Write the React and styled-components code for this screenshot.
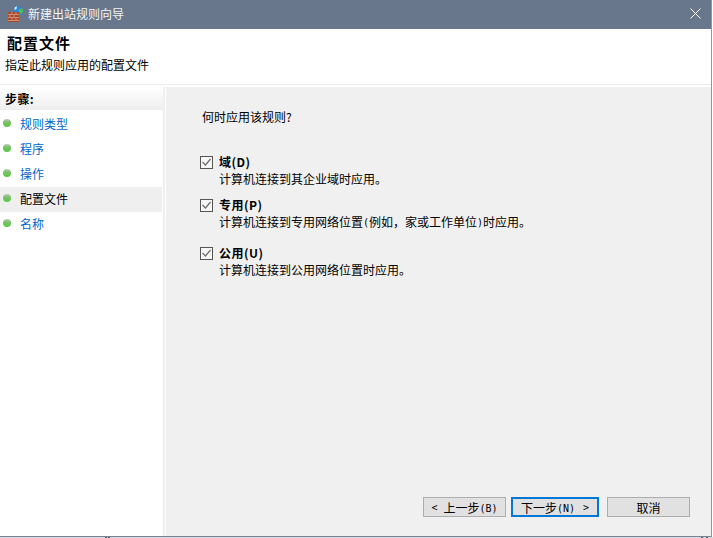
import styled, { createGlobalStyle } from "styled-components";

const GlobalStyle = createGlobalStyle`
  html, body {
    margin: 0;
    padding: 0;
    background: #ffffff;
    overflow: hidden;
  }
  * { box-sizing: border-box; }
`;

const FONT = `"Noto Sans CJK SC", "Liberation Sans", sans-serif`;

const Frame = styled.div`
  width: 713px;
  height: 538px;
  background: #fff;
  font-family: ${FONT};
  font-size: 12px;
  color: #000;
  display: flex;
  flex-direction: column;
`;

const Window = styled.div`
  width: 712px;
  height: 537px;
  flex: none;
  display: flex;
  flex-direction: column;
  border-right: 1px solid #8a98aa;
  border-bottom: 1px solid #76859a;
`;

const BottomStrip = styled.div`
  height: 1px;
  flex: none;
  background: #d9d9d9;
  display: flex;
`;

const StripMark = styled.span`
  width: 2px;
  height: 1px;
  margin-left: ${(p) => p.$space}px;
  background: #555;
`;

const TitleBar = styled.div`
  height: 29px;
  flex: none;
  background: #68778c;
  display: flex;
  align-items: center;
  padding: 0 10px 2px 8px;
  color: #f4f6f8;
`;

const TitleText = styled.span`
  margin-left: 4px;
  font-size: 12px;
  line-height: 16px;
`;

const CloseButton = styled.div`
  margin-left: auto;
  display: flex;
`;

const Header = styled.div`
  height: 56px;
  flex: none;
  background: #fff;
  padding: 4px 0 0 7px;
  border-bottom: 1px solid #ececec;
`;

const Heading = styled.div`
  font-size: 15px;
  font-weight: 700;
  line-height: 20px;
  letter-spacing: 1px;
`;

const SubHeading = styled.div`
  margin: 4px 0 0 -2px;
  font-size: 12px;
  line-height: 16px;
`;

const Body = styled.div`
  flex: 1;
  display: flex;
  padding-top: 2px;
  background: #fff;
  min-height: 0;
`;

const Sidebar = styled.div`
  width: 165px;
  flex: none;
  border-right: 2px solid #efefef;
`;

const SidebarTitle = styled.div`
  height: 23px;
  width: 163px;
  padding-left: 5px;
  display: flex;
  align-items: center;
  font-weight: 700;
  font-size: 12px;
  letter-spacing: 0.4px;
  background: linear-gradient(#ffffff, #eeeeee);
`;

const StepList = styled.div`
  display: flex;
  flex-direction: column;
  padding-top: 2px;
`;

const Step = styled.div`
  width: 162px;
  height: 25px;
  display: flex;
  align-items: center;
  gap: 9px;
  padding: 0 0 2px 3px;
  font-size: 12px;
  color: ${(p) => (p.$active ? "#000" : "#0066cc")};
  background: ${(p) => (p.$active ? "#efefef" : "transparent")};
`;

const Bullet = styled.span`
  width: 8px;
  height: 8px;
  margin-top: -2px;
  border-radius: 50%;
  flex: none;
  background: linear-gradient(#b9cdb6 0, #7fbd6c 40%, #4fd038 100%);
`;

const Content = styled.div`
  flex: 1;
  margin-left: 1px;
  background: #f0f0f0;
  display: flex;
  flex-direction: column;
  padding: 22px 21px 19px 34px;
`;

const Question = styled.div`
  line-height: 16px;
  margin-left: 2px;
`;

const Options = styled.div`
  margin-top: 29px;
  display: flex;
  flex-direction: column;
`;

const Option = styled.div`
  display: grid;
  grid-template-columns: 13px 1fr;
  column-gap: 6px;
  margin-bottom: ${(p) => p.$gap}px;
`;

const Box = styled.span`
  width: 13px;
  height: 13px;
  margin-top: 2px;
  border: 1px solid #555;
  background: #f6f6f6;
  display: flex;
`;

const OptionLabel = styled.div`
  font-weight: 700;
  line-height: 16px;
  letter-spacing: 0.5px;
`;

const OptionText = styled.div`
  grid-column: 2;
  margin-top: 1px;
  line-height: 16px;
`;

const Footer = styled.div`
  margin-top: auto;
  display: flex;
  justify-content: flex-end;
`;

const Button = styled.div`
  width: ${(p) => p.$width}px;
  height: 20px;
  margin-left: ${(p) => p.$space || 0}px;
  display: flex;
  align-items: center;
  justify-content: center;
  gap: ${(p) => p.$gap || 0}px;
  background: #e1e1e1;
  border: ${(p) => (p.$primary ? "2px solid #0078d7" : "1px solid #adadad")};
  font-size: 12px;
`;

const Mono = styled.span`
  font-family: "DejaVu Sans Mono", monospace;
  font-size: 10px;
  vertical-align: 1px;
`;

const options = [
  {
    label: "域(D)",
    text: <>计算机连接到其企业域时应用。</>,
    gap: 10,
  },
  {
    label: "专用(P)",
    text: (
      <>
        计算机连接到专用网络位置<Mono>(</Mono>例如，家或工作单位<Mono>)</Mono>时应用。
      </>
    ),
    gap: 14,
  },
  {
    label: "公用(U)",
    text: <>计算机连接到公用网络位置时应用。</>,
    gap: 0,
  },
];

const steps = ["规则类型", "程序", "操作", "配置文件", "名称"];

const FirewallIcon = () => (
  <svg width="16" height="16" viewBox="0 0 16 16">
    <circle cx="10" cy="5" r="5" fill="#2a86d6" />
    <path d="M6.500 2c.5-1 1.500-1.500 2.500-1.500l-.5 2.500-2 1z" fill="#e4f0f8" />
    <path d="M11 3l3.500-.5.5 3-2 2.500-2-2z" fill="#4cc24a" />
    <rect x="0" y="6" width="11" height="10" fill="#a8492e" />
    <path d="M0 8.500h11M0 11.500h11M0 14.500h11M4 6v2.500M8 6v2.500M2 8.500v3M6 8.500v3M4 11.500v3M8 11.500v3" stroke="#d08e72" strokeWidth="1" fill="none" />
  </svg>
);

const CheckIcon = () => (
  <svg width="11" height="11" viewBox="0 0 11 11">
    <path d="M1.500 5l3 3 5-6" stroke="#6e6e6e" strokeWidth="1.2" fill="none" />
  </svg>
);

const App = () => {
  return (
    <>
      <GlobalStyle />
      <Frame>
        <Window>
          <TitleBar>
            <FirewallIcon />
            <TitleText>新建出站规则向导</TitleText>
            <CloseButton>
              <svg width="11" height="11" viewBox="0 0 11 11">
                <path d="M.5.500l10 10M10.500.500l-10 10" stroke="#fff" strokeWidth="1" fill="none" />
              </svg>
            </CloseButton>
          </TitleBar>
          <Header>
            <Heading>配置文件</Heading>
            <SubHeading>指定此规则应用的配置文件</SubHeading>
          </Header>
          <Body>
            <Sidebar>
              <SidebarTitle>步骤:</SidebarTitle>
              <StepList>
                {steps.map((s) => (
                  <Step key={s} $active={s === "配置文件"}>
                    <Bullet />
                    {s}
                  </Step>
                ))}
              </StepList>
            </Sidebar>
            <Content>
              <Question>何时应用该规则?</Question>
              <Options>
                {options.map((o) => (
                  <Option key={o.label} $gap={o.gap}>
                    <Box>
                      <CheckIcon />
                    </Box>
                    <OptionLabel>{o.label}</OptionLabel>
                    <OptionText>{o.text}</OptionText>
                  </Option>
                ))}
              </Options>
              <Footer>
                <Button $width={83} $gap={6}>
                  <Mono>&lt;</Mono>
                  <span>上一步<Mono>(B)</Mono></span>
                </Button>
                <Button $width={88} $space={5} $gap={8} $primary>
                  <span>下一步<Mono>(N)</Mono></span>
                  <Mono>&gt;</Mono>
                </Button>
                <Button $width={83} $space={8}>取消</Button>
              </Footer>
            </Content>
          </Body>
        </Window>
        <BottomStrip>
          <StripMark $space={105} />
          <StripMark $space={1} />
          <StripMark $space={591} />
          <StripMark $space={3} />
        </BottomStrip>
      </Frame>
    </>
  );
};

export default App;
